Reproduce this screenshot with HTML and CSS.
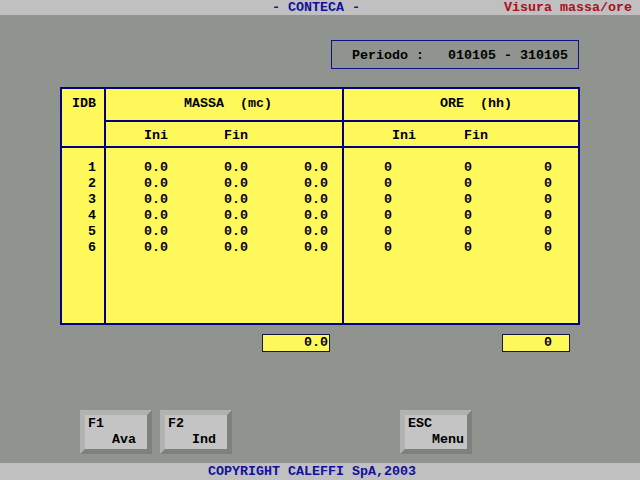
FILE: index.html
```html
<!DOCTYPE html>
<html lang="it">
<head>
<meta charset="utf-8">
<title>CONTECA - Visura massa/ore</title>
<link rel="stylesheet" href="styles.css">
</head>
<body>
<header class="topbar">
  <span class="app-title">- CONTECA -</span>
  <span class="screen-title">Visura massa/ore</span>
</header>

<main class="screen">
  <div class="period">Periodo :   010105 - 310105</div>

  <div class="grid-table">
    <div class="cell idb-head">IDB</div>
    <div class="cell group-head massa-head">MASSA  (mc)</div>
    <div class="cell group-head ore-head">ORE  (hh)</div>
    <div class="cell sub-head massa-sub"><span>Ini</span><span>Fin</span></div>
    <div class="cell sub-head ore-sub"><span>Ini</span><span>Fin</span></div>

    <div class="cell idb-body">
      <div>1</div><div>2</div><div>3</div><div>4</div><div>5</div><div>6</div>
    </div>
    <div class="cell values massa-body">
      <div class="vrow"><span>0.0</span><span>0.0</span><span>0.0</span></div>
      <div class="vrow"><span>0.0</span><span>0.0</span><span>0.0</span></div>
      <div class="vrow"><span>0.0</span><span>0.0</span><span>0.0</span></div>
      <div class="vrow"><span>0.0</span><span>0.0</span><span>0.0</span></div>
      <div class="vrow"><span>0.0</span><span>0.0</span><span>0.0</span></div>
      <div class="vrow"><span>0.0</span><span>0.0</span><span>0.0</span></div>
    </div>
    <div class="cell values ore-body">
      <div class="vrow"><span>0</span><span>0</span><span>0</span></div>
      <div class="vrow"><span>0</span><span>0</span><span>0</span></div>
      <div class="vrow"><span>0</span><span>0</span><span>0</span></div>
      <div class="vrow"><span>0</span><span>0</span><span>0</span></div>
      <div class="vrow"><span>0</span><span>0</span><span>0</span></div>
      <div class="vrow"><span>0</span><span>0</span><span>0</span></div>
    </div>
  </div>

  <div class="totals">
    <div class="total total-massa">0.0</div>
    <div class="total total-ore">0</div>
  </div>

  <div class="keys">
    <div class="key key-f1"><div class="key-code">F1</div><div class="key-label">Ava</div></div>
    <div class="key key-f2"><div class="key-code">F2</div><div class="key-label">Ind</div></div>
    <div class="key key-esc"><div class="key-code">ESC</div><div class="key-label">Menu</div></div>
  </div>
</main>

<footer class="bottombar">COPYRIGHT CALEFFI SpA,2003</footer>
</body>
</html>
```

FILE: styles.css
```css
html, body {
  margin: 0;
  padding: 0;
}

body {
  width: 640px;
  height: 480px;
  overflow: hidden;
  background: #8f958e;
  font-family: "Liberation Mono", "DejaVu Sans Mono", monospace;
  font-weight: bold;
  font-size: 13.333px;
  line-height: 16px;
  color: #000;
  display: flex;
  flex-direction: column;
}

.topbar {
  height: 15px;
  line-height: 15px;
  background: #c0c0c0;
  display: flex;
}

.app-title {
  margin-left: 272px;
  color: #10109a;
}

.screen-title {
  margin-left: auto;
  margin-right: 8px;
  color: #a8101c;
}

.screen {
  flex: 1;
  display: flex;
  flex-direction: column;
  align-items: flex-start;
}

.period {
  box-sizing: border-box;
  margin: 25px 0 0 331px;
  width: 248px;
  height: 29px;
  border: 1px solid #10108a;
  padding: 7px 0 0 20px;
  white-space: pre;
}

.grid-table {
  margin: 18px 0 0 60px;
  display: grid;
  grid-template-columns: 42px 236px 234px;
  grid-template-rows: 31px 24px 175px;
  gap: 2px;
  padding: 2px;
  background: #000080;
}

.cell {
  background: #fff85a;
}

.idb-head {
  grid-row: 1 / 3;
  padding: 7px 0 0 10px;
}

.group-head {
  padding-top: 7px;
  white-space: pre;
}

.massa-head { padding-left: 78px; }
.ore-head { padding-left: 96px; }

.sub-head {
  display: flex;
  padding-top: 6px;
}

.massa-sub { padding-left: 38px; gap: 56px; }
.ore-sub { padding-left: 48px; gap: 48px; }

.idb-body {
  padding: 12px 0 0 26px;
}

.values {
  padding-top: 12px;
}

.vrow {
  display: grid;
  grid-template-columns: repeat(3, 80px);
}

.massa-body { padding-left: 38px; }
.ore-body { padding-left: 40px; }

.totals {
  margin: 9px 0 0 262px;
  display: flex;
  gap: 172px;
}

.total {
  box-sizing: border-box;
  width: 68px;
  height: 18px;
  border: 1px solid #14143c;
  background: #fff85a;
  text-align: right;
}

.total-massa { padding-right: 1px; }
.total-ore { padding-right: 17px; }

.keys {
  margin: 58px 0 0 80px;
  display: flex;
}

.key {
  box-sizing: border-box;
  width: 72px;
  height: 44px;
  border: 5px solid;
  border-color: #b0b4b0 #7d827c #7d827c #b0b4b0;
  background: #c3c4c3;
  padding: 1px 0 0 3px;
}

.key-label {
  padding-left: 24px;
}

.key-f2 { margin-left: 8px; }
.key-esc { margin-left: 168px; }

.bottombar {
  height: 17px;
  background: #c0c0c0;
  color: #10109a;
  padding: 1px 0 0 208px;
  box-sizing: border-box;
}
```
